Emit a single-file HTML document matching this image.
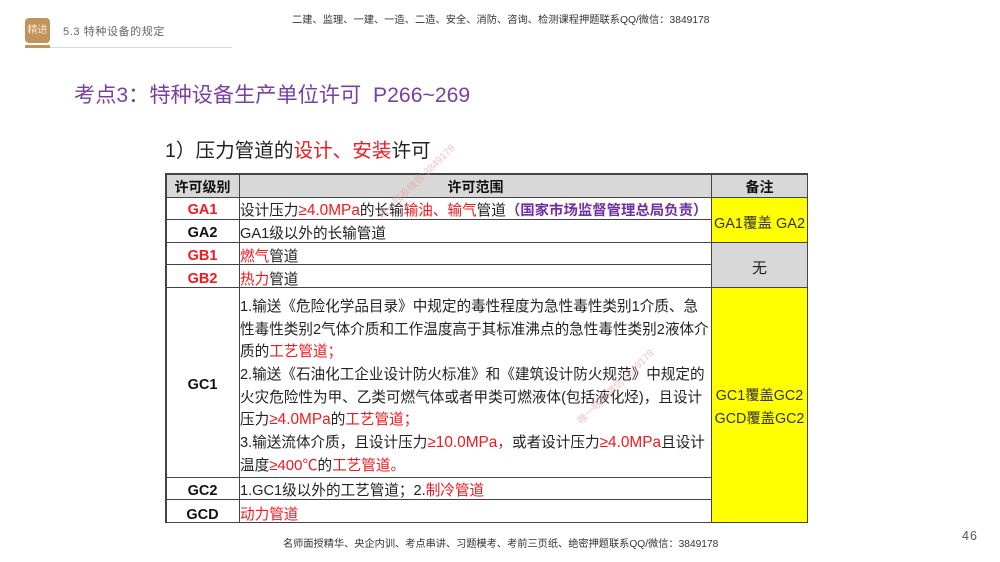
<!DOCTYPE html>
<html lang="zh"><head><meta charset="utf-8"><style>
html,body{margin:0;padding:0;background:#fff}
#p{position:relative;width:1000px;height:562px;overflow:hidden;background:#fff;font-family:"Liberation Sans","Noto Sans CJK SC",sans-serif;color:#222;filter:blur(.35px)}
#p div{position:absolute;white-space:nowrap}
.t{left:240px;font-size:14.6px;line-height:22px;height:22px;color:#222}
.r,.t i{color:#f0191e;font-style:normal}
.t u{color:#f0191e;text-decoration:none;font-size:15.4px}
.c{left:166px;width:73px;text-align:center;font-size:14.5px;font-weight:bold;line-height:22px;color:#111}
.h{background:#444}
.n{font-size:14.3px;line-height:22px;text-align:center;color:#222}
.w{font-size:10px;line-height:12px;color:#e89a9a;opacity:.6;transform:rotate(-44deg);transform-origin:left center}
</style></head><body><div id="p">
<div style="left:25px;top:18px;width:25px;height:25px;background:#c2935a;border-radius:4px;color:#f6e8d6;font-size:10px;line-height:25px;text-align:center">精进</div>
<div style="left:25px;top:45px;width:25px;height:3px;background:#c2935a"></div>
<div style="left:50px;top:47px;width:182px;height:1px;background:#d9d9d9"></div>
<div style="left:63px;top:23.5px;font-size:11px;line-height:16px;color:#666;letter-spacing:.6px">5.3 特种设备的规定</div>
<div style="left:292px;top:14px;font-size:10.25px;line-height:14px;color:#333">二建、监理、一建、一造、二造、安全、消防、咨询、检测课程押题联系QQ/微信：3849178</div>
<div style="left:74px;top:81px;font-size:21.2px;line-height:30px;color:#7a3fa0">考点3：特种设备生产单位许可&nbsp; P266~269</div>
<div style="left:165px;top:137px;font-size:19.6px;line-height:28px;color:#222">1）压力管道的<span class="r">设计、安装</span>许可</div>

<div style="left:166px;top:174px;width:641px;height:23px;background:#d8d8d8"></div>
<div style="left:712px;top:197px;width:95px;height:45px;background:#ffff00"></div>
<div style="left:712px;top:242px;width:95px;height:45px;background:#d8d8d8"></div>
<div style="left:712px;top:287px;width:95px;height:235px;background:#ffff00"></div>

<div class="h" style="left:165px;top:173px;width:643px;height:1.5px"></div>
<div class="h" style="left:165px;top:196.5px;width:643px;height:1.5px"></div>
<div class="h" style="left:165px;top:219px;width:547px;height:1.2px"></div>
<div class="h" style="left:165px;top:241.5px;width:643px;height:1.2px"></div>
<div class="h" style="left:165px;top:264px;width:547px;height:1.2px"></div>
<div class="h" style="left:165px;top:286.5px;width:643px;height:1.2px"></div>
<div class="h" style="left:165px;top:476.5px;width:547px;height:1.2px"></div>
<div class="h" style="left:165px;top:499px;width:547px;height:1.2px"></div>
<div class="h" style="left:165px;top:521.5px;width:643px;height:1.5px"></div>
<div class="h" style="left:165px;top:173px;width:1.5px;height:350px"></div>
<div class="h" style="left:238.5px;top:173px;width:1.5px;height:350px"></div>
<div class="h" style="left:711px;top:173px;width:1.2px;height:350px"></div>
<div class="h" style="left:806.5px;top:173px;width:1.5px;height:350px"></div>

<div class="c" style="top:176px;font-size:14px">许可级别</div>
<div style="left:240px;width:471px;top:176px;text-align:center;font-size:14px;font-weight:bold;line-height:22px;color:#111">许可范围</div>
<div style="left:712px;width:95px;top:176px;text-align:center;font-size:14px;font-weight:bold;line-height:22px;color:#111">备注</div>
<div class="c" style="top:199px;color:#f0191e">GA1</div>
<div class="c" style="top:222px">GA2</div>
<div class="c" style="top:245px;color:#f0191e">GB1</div>
<div class="c" style="top:267.5px;color:#f0191e">GB2</div>
<div class="c" style="top:374px">GC1</div>
<div class="c" style="top:480px">GC2</div>
<div class="c" style="top:503.5px">GCD</div>

<div class="t" style="top:200px">设计压力<u>≥4.0MPa</u>的长输<i>输油、输气</i>管道<b style="color:#7030a0;font-size:14.4px">（国家市场监督管理总局负责）</b></div>
<div class="t" style="top:223px">GA1级以外的长输管道</div>
<div class="t" style="top:246px"><i>燃气</i>管道</div>
<div class="t" style="top:269px"><i>热力</i>管道</div>
<div class="t" style="top:296px">1.输送《危险化学品目录》中规定的毒性程度为急性毒性类别1介质、急</div>
<div class="t" style="top:319px">性毒性类别2气体介质和工作温度高于其标准沸点的急性毒性类别2液体介</div>
<div class="t" style="top:341px">质的<i>工艺管道；</i></div>
<div class="t" style="top:364px">2.输送《石油化工企业设计防火标准》和《建筑设计防火规范》中规定的</div>
<div class="t" style="top:387px">火灾危险性为甲、乙类可燃气体或者甲类可燃液体(包括液化烃)，且设计</div>
<div class="t" style="top:409px">压力<u>≥4.0MPa</u>的<i>工艺管道；</i></div>
<div class="t" style="top:432px">3.输送流体介质，且设计压力<u>≥10.0MPa</u><i>，</i>或者设计压力<u>≥4.0MPa</u>且设计</div>
<div class="t" style="top:455px">温度<u style="font-size:15px">≥400℃</u>的<i>工艺管道。</i></div>
<div class="t" style="top:480px">1.GC1级以外的工艺管道；2.<i>制冷管道</i></div>
<div class="t" style="top:504px"><i>动力管道</i></div>

<div class="n" style="left:712px;width:95px;top:212.5px;font-size:14.5px;color:#333">GA1覆盖 GA2</div>
<div class="n" style="left:712px;width:95px;top:258px;font-size:15px">无</div>
<div class="n" style="left:712px;width:95px;top:385px;color:#333">GC1覆盖GC2</div>
<div class="n" style="left:712px;width:95px;top:408px;color:#333">GCD覆盖GC2</div>

<div class="w" style="left:381px;top:212px">唯一联系微信:3849178</div>
<div class="w" style="left:580px;top:417px">唯一联系微信:3849178</div>

<div style="left:283px;top:538px;font-size:10.2px;line-height:14px;color:#333">名师面授精华、央企内训、考点串讲、习题模考、考前三页纸、绝密押题联系QQ/微信：3849178</div>
<div style="left:962px;top:528px;font-size:12.5px;line-height:16px;color:#555;letter-spacing:1px">46</div>
</div></body></html>
